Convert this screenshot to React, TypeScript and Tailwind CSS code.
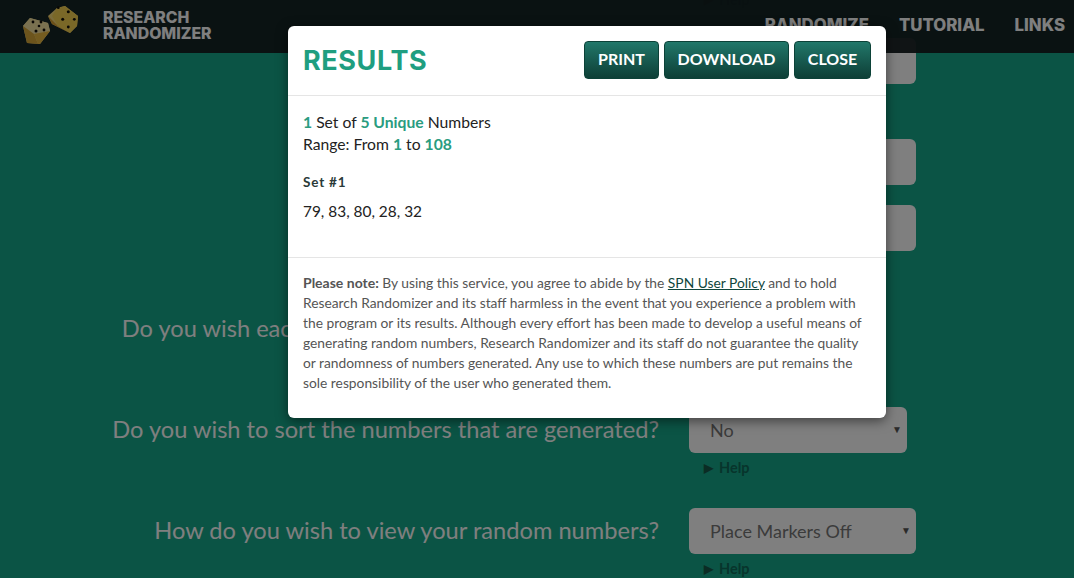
import React from "react";

function Dice() {
  return (
    <svg width="60" height="46" viewBox="0 0 60 46" className="shrink-0">
      <path d="M26 12 L35 4 L43 2 L56 12 L55 22 L48 29 L30 20 Z" fill="#f5d878" />
      <path d="M26 12 L36 22 L48 29 L30 20 Z" fill="#d9a030" />
      <path d="M35 4 L43 2 L56 12 L55 22 L48 29 L36 22 L30 12 Z" fill="#f5d050" />
      <path d="M1 22 L8 14 L26 19 L28 27 L18 40 L5 39 Z" fill="#f2dc90" />
      <path d="M8 14 L26 19 L28 27 L12 30 L1 22 Z" fill="#f5e2a0" />
      <path d="M1 22 L12 30 L16 40 L5 39 Z" fill="#d8a838" />
      <path d="M12 30 L28 27 L18 40 L16 40 Z" fill="#e8b840" />
      <g fill="#120f08">
        <circle cx="36.3" cy="3.7" r="1.4" /><circle cx="46.3" cy="7.7" r="1.5" /><circle cx="40.7" cy="15.3" r="1.5" /><circle cx="52.3" cy="15.3" r="1.4" /><circle cx="46.3" cy="23" r="1.4" />
        <circle cx="11" cy="18" r="1.4" /><circle cx="19" cy="18" r="1.4" /><circle cx="17" cy="22" r="1.3" /><circle cx="14" cy="27" r="1.5" /><circle cx="22" cy="26" r="1.4" />
      </g>
    </svg>
  );
}

function Help() {
  return (
    <div className="mt-[7px] ml-[15px] flex h-[16px] items-center gap-[6px] text-[14.5px] font-bold text-[#0f6a58]">
      <span className="text-[12px] text-[#165848]">▶</span>
      <span>Help</span>
    </div>
  );
}

function Row({ label, value, w, mt, arrow = true, help = true, labelW = "w-[659px]" }: { label: string; value: string; w: string; mt: string; arrow?: boolean; help?: boolean; labelW?: string }) {
  return (
    <div className={`flex items-start gap-[30px] ${mt}`}>
      <div className={`-mt-px ${labelW} shrink-0 whitespace-nowrap text-right text-[23.65px] leading-[46px] text-white`}>{label}</div>
      <div>
        <div className={`relative h-[46px] ${w} rounded-[6px] bg-white pl-[21px] text-[18px] leading-[46px] text-[#777]`}>
          {value}
          {arrow && <span className="absolute right-[5px] top-[-1px] text-[10px] text-[#555]">▼</span>}
        </div>
        {help && <Help />}
      </div>
    </div>
  );
}

function Btn({ children, w }: { children: React.ReactNode; w: string }) {
  return (
    <button className={`h-[38px] ${w} rounded-[4px] border border-[#0c4238] bg-gradient-to-b from-[#21786a] to-[#0e3f37] pb-[1px] text-[16px] font-bold text-white`}>
      {children}
    </button>
  );
}

const G = ({ children }: { children: React.ReactNode }) => <b className="font-bold text-[#2a9c80]">{children}</b>;

export default function App() {
  return (
    <div className="relative h-[578px] w-[1074px] overflow-hidden bg-[#16a88a] font-['Lato','Noto_Sans',sans-serif]">
      <header className="absolute inset-x-0 top-0 z-10 flex h-[53px] items-center bg-[#141e20]/95 pl-[22px]">
        <Dice />
        <div className="ml-[21px] -mt-[2px] font-['Inter',sans-serif] text-[15.8px] font-extrabold leading-[16px] text-white">
          RESEARCH<br />RANDOMIZER
        </div>
        <nav className="ml-auto mr-[9px] mt-[-2px] flex gap-[30px] font-['Inter',sans-serif] text-[16.8px] font-extrabold text-white">
          <span>RANDOMIZE</span><span>TUTORIAL</span><span>LINKS</span>
        </nav>
      </header>
      <main className="-mt-[15px]">
        <div className="ml-[689px]"><Help /></div>
        <Row label="" value="" w="w-[227px]" mt="mt-[30px]" arrow={false} help={false} />
        <Row label="" value="" w="w-[227px]" mt="mt-[55px]" arrow={false} help={false} />
        <Row label="" value="" w="w-[227px]" mt="mt-[20px]" arrow={false} help={false} />
        <Row label="Do you wish each number in a set to remain unique?" value="Yes" w="w-[150px]" mt="mt-[55px]" labelW="w-[662px] -mr-[3px]" />
        <Row label="Do you wish to sort the numbers that are generated?" value="No" w="w-[218px]" mt="mt-[32px]" />
        <Row label="How do you wish to view your random numbers?" value="Place Markers Off" w="w-[227px]" mt="mt-[32px]" />
      </main>
      <div className="absolute inset-0 z-20 bg-black/50" />
      <section className="absolute left-[288px] top-[26px] z-30 h-[392px] w-[598px] rounded-[6px] bg-white shadow-[0_3px_12px_rgba(0,0,0,0.5)]">
        <div className="flex h-[70px] items-center justify-between border-b border-[#e5e5e5] px-[15px]">
          <h1 className="mt-[1px] font-['Inter',sans-serif] text-[27px] font-bold tracking-[0.6px] text-[#1f9e80]">RESULTS</h1>
          <div className="-mt-[2px] flex gap-[5px]">
            <Btn w="w-[75px]">PRINT</Btn>
            <Btn w="w-[125px]">DOWNLOAD</Btn>
            <Btn w="w-[77px]">CLOSE</Btn>
          </div>
        </div>
        <div className="h-[162px] border-b border-[#e5e5e5] px-[15px] pt-[15px] text-[#222]">
          <p className="text-[15.7px] leading-[22px]"><G>1</G> Set of <G>5 Unique</G> Numbers<br />Range: From <G>1</G> to <G>108</G></p>
          <p className="mt-[17px] text-[13.5px] font-bold leading-[20px] tracking-[0.8px] text-[#2a3a38]">Set #1</p>
          <p className="mt-[9px] text-[15.4px] leading-[20px]">79, 83, 80, 28, 32</p>
        </div>
        <p className="px-[15px] pt-[15px] text-[13.8px] leading-[20px] text-[#555]">
          <b className="text-[14px] font-bold">Please note:</b> By using this service, you agree to abide by the <a className="text-[#10463c] underline">SPN User Policy</a> and to hold Research Randomizer and its staff harmless in the event that you experience a problem with the program or its results. Although every effort has been made to develop a useful means of generating random numbers, Research Randomizer and its staff do not guarantee the quality or randomness of numbers generated. Any use to which these numbers are put remains the sole responsibility of the user who generated them.
        </p>
      </section>
    </div>
  );
}
